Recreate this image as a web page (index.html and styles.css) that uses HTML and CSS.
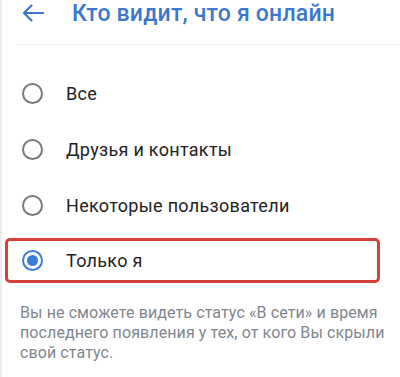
FILE: index.html
```html
<!DOCTYPE html>
<html lang="ru">
<head>
<meta charset="utf-8">
<link rel="stylesheet" href="styles.css">
</head>
<body>
<div class="page">
  <header class="header">
    <svg class="back" width="22" height="18" viewBox="0 0 22 18">
      <path d="M21 9H2M9.5 1.5L2 9l7.5 7.5" fill="none" stroke="#3b78cc" stroke-width="2.2" stroke-linecap="round" stroke-linejoin="round"/>
    </svg>
    <h1 class="title">Кто видит, что я онлайн</h1>
  </header>
  <div class="list">
    <div class="row"><span class="radio"></span><span class="label">Все</span></div>
    <div class="row"><span class="radio"></span><span class="label">Друзья и контакты</span></div>
    <div class="row"><span class="radio"></span><span class="label">Некоторые пользователи</span></div>
    <div class="row-wrap">
      <div class="row selected"><span class="radio checked"></span><span class="label">Только я</span></div>
    </div>
  </div>
  <p class="note">Вы не сможете видеть статус «В сети» и время последнего появления у тех, от кого Вы скрыли свой статус.</p>
</div>
</body>
</html>
```
FILE: styles.css
```css
html, body {
  margin: 0;
  padding: 0;
  background: #fff;
}
body {
  font-family: Roboto, "Noto Sans", Arial, sans-serif;
}
.page {
  width: 400px;
  height: 377px;
  box-sizing: border-box;
  border-left: 2px solid #ececec;
  overflow: hidden;
}
.header {
  display: flex;
  align-items: center;
  height: 27px;
  padding-bottom: 17px;
  border-bottom: 1px solid #f0f0f0;
  margin-left: 16px;
  padding-left: 4px;
}
.back {
  flex: none;
  margin-top: -1px;
}
.title {
  margin: 0 0 0 28px;
  font-size: 23px;
  font-weight: 500;
  letter-spacing: 0.2px;
  color: #3b78cc;
  line-height: 27px;
  white-space: nowrap;
}
.list {
  padding-top: 20px;
}
.row {
  display: flex;
  align-items: center;
  height: 56px;
  padding-left: 20px;
}
.radio {
  flex: none;
  width: 21px;
  height: 21px;
  box-sizing: border-box;
  border: 2px solid #777a7e;
  border-radius: 50%;
  margin-right: 23px;
  position: relative;
}
.radio.checked {
  border-color: #3a7ddb;
}
.radio.checked::after {
  content: "";
  position: absolute;
  left: 3px;
  top: 3px;
  width: 11px;
  height: 11px;
  border-radius: 50%;
  background: #3a7ddb;
}
.label {
  font-size: 18px;
  letter-spacing: 0.3px;
  color: #222;
}
.row-wrap {
  height: 56px;
  padding-top: 5px;
  box-sizing: border-box;
}
.row.selected {
  height: 45px;
  box-sizing: border-box;
  margin-left: 3px;
  width: 375px;
  border: 3px solid #d8413a;
  border-radius: 5px;
  padding-left: 14px;
}
.note {
  margin: 14px 4px 0 18px;
  font-size: 16px;
  letter-spacing: 0.1px;
  line-height: 20px;
  color: #7f868e;
}
```
